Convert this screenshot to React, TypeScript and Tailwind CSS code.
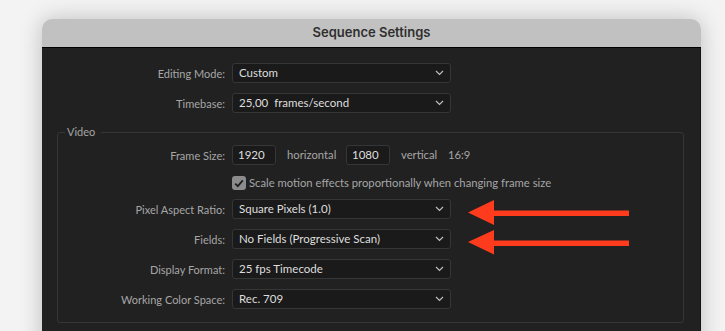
import React from "react";

const font = { fontFamily: "Lato, 'Noto Sans', sans-serif" };

function Chevron() {
  return (
    <svg width="9" height="6" viewBox="0 0 9 6" className="shrink-0">
      <polyline points="1,1 4.5,4.5 8,1" fill="none" stroke="#bdbdbd" strokeWidth="1.2" />
    </svg>
  );
}

function Select({ value }: { value: string }) {
  return (
    <div className="flex h-[20px] w-[219px] items-center justify-between rounded-[3px] border border-[#363636] bg-[#1a1a1a] pl-[6px] pr-[6px] text-[11.5px] text-[#dedede]">
      <span className="whitespace-pre leading-none">{value}</span>
      <Chevron />
    </div>
  );
}

function Row({ label, labelW, children }: { label: string; labelW: string; children: React.ReactNode }) {
  return (
    <div className="flex h-[20px] items-center">
      <div className={`${labelW} shrink-0 text-right text-[11px] leading-none text-[#a6a6a6]`}>{label}</div>
      <div className="ml-[7px]">{children}</div>
    </div>
  );
}

export default function App() {
  return (
    <div className="relative h-[331px] w-[725px] overflow-hidden bg-[#f3f3f3]" style={font}>
      <div className="ml-[42px] mt-[19px] h-[400px] w-[659px] overflow-hidden rounded-t-[10px] shadow-[0_0_22px_rgba(0,0,0,0.22)]">
        <div className="flex h-[29px] items-center justify-center border-b border-black bg-[#c1c1c1]">
          <span className="text-[13px] font-semibold text-[#2f2f2f]" style={{ fontFamily: "Inter, sans-serif" }}>
            Sequence Settings
          </span>
        </div>
        <div className="h-full border-r border-[#151515] bg-[#212121] pt-[15px]">
          <div className="flex flex-col gap-[10px]">
            <Row label="Editing Mode:" labelW="w-[183px]">
              <Select value="Custom" />
            </Row>
            <Row label="Timebase:" labelW="w-[183px]">
              <Select value="25,00  frames/second" />
            </Row>
          </div>
          <fieldset className="ml-[15px] mt-[11px] w-[627px] rounded-[3px] border border-[#363636] pb-[13px] pt-[5px]">
            <legend className="ml-[7px] pl-[2px] pr-[6px] text-[11px] leading-[16px] text-[#a6a6a6]">Video</legend>
            <Row label="Frame Size:" labelW="w-[167px]">
              <div className="flex items-center text-[11.25px] text-[#a6a6a6]">
                <div className="flex h-[20px] w-[44px] items-center rounded-[3px] border border-[#363636] bg-[#1a1a1a] pl-[5px] text-[11.5px] text-[#dedede]">
                  1920
                </div>
                <span className="ml-[11px] w-[59px]">horizontal</span>
                <div className="flex h-[20px] w-[44px] items-center rounded-[3px] border border-[#363636] bg-[#1a1a1a] pl-[5px] text-[11.5px] text-[#dedede]">
                  1080
                </div>
                <span className="ml-[11px] w-[47px]">vertical</span>
                <span>16:9</span>
              </div>
            </Row>
            <div className="mt-[11px] flex h-[14px] items-center pl-[174px]">
              <div className="flex h-[14px] w-[14px] items-center justify-center rounded-[3px] bg-[#8c8c8c]">
                <svg width="10" height="9" viewBox="0 0 10 9">
                  <polyline points="1.2,4.6 3.8,7.2 8.8,1.4" fill="none" stroke="#1f1f1f" strokeWidth="1.8" />
                </svg>
              </div>
              <span className="ml-[3px] text-[11.25px] leading-none text-[#a6a6a6]">
                Scale motion effects proportionally when changing frame size
              </span>
            </div>
            <div className="mt-[9px] flex flex-col gap-[10px]">
              <Row label="Pixel Aspect Ratio:" labelW="w-[167px]">
                <Select value="Square Pixels (1.0)" />
              </Row>
              <Row label="Fields:" labelW="w-[167px]">
                <Select value="No Fields (Progressive Scan)" />
              </Row>
              <Row label="Display Format:" labelW="w-[167px]">
                <Select value="25 fps Timecode" />
              </Row>
              <Row label="Working Color Space:" labelW="w-[167px]">
                <Select value="Rec. 709" />
              </Row>
            </div>
          </fieldset>
        </div>
      </div>
      <svg className="pointer-events-none absolute left-0 top-0" width="725" height="331" viewBox="0 0 725 331">
        <g fill="#ff3b1e">
          <polygon points="468,212.5 494,200 494,225" />
          <rect x="492" y="210.5" width="137" height="5.5" />
          <polygon points="468,242 494,230 494,254.5" />
          <rect x="492" y="240.5" width="137" height="5.5" />
        </g>
      </svg>
    </div>
  );
}
